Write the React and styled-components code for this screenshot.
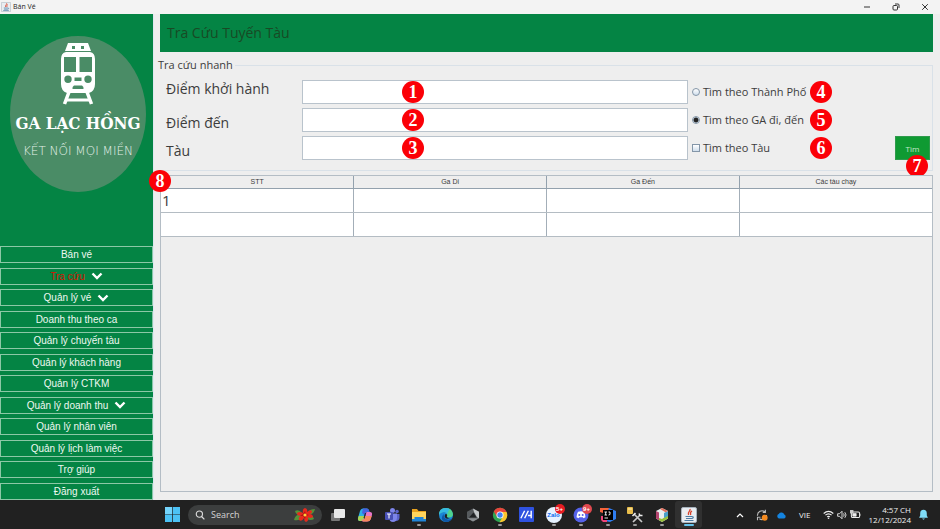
import React from "react";
import styled, { createGlobalStyle, css } from "styled-components";

const UI = `"Open Sans", "Noto Sans", sans-serif`;
const SANS = `"Liberation Sans", Arial, sans-serif`;
const GREEN = "#048444";

const Global = createGlobalStyle`
  * { box-sizing: border-box; }
  body { margin: 0; background: #eeeeee; font-family: ${UI}; color: #3c3c3c; }
  button, input { font: inherit; color: inherit; margin: 0; padding: 0; }
`;

const Desktop = styled.div`
  display: flex;
  flex-direction: column;
  min-height: 100vh;
`;

/* ---------- window title bar ---------- */

const TitleBar = styled.header`
  display: flex;
  align-items: center;
  height: 14px;
  padding: 0 8px 0 1px;
  gap: 2px;
  background: #f3f3f3;
  font-family: ${UI};
  font-size: 7px;
  line-height: 14px;
  color: #222;
`;

const WindowTitle = styled.span`
  flex: 1;
`;

const WindowControls = styled.div`
  display: flex;
  gap: 15px;
`;

const WindowButton = styled.button`
  display: flex;
  align-items: center;
  justify-content: center;
  width: 14px;
  height: 14px;
  border: 0;
  background: none;
`;

/* ---------- sidebar ---------- */

const Body = styled.div`
  display: flex;
  flex: 1;
`;

const Sidebar = styled.aside`
  display: flex;
  flex-direction: column;
  flex: none;
  width: 153px;
  background: ${GREEN};
`;

const LogoArea = styled.div`
  display: flex;
  justify-content: center;
  height: 232px;
  padding: 22px 0 0 3px;
`;

const LogoDisc = styled.div`
  display: flex;
  flex-direction: column;
  align-items: center;
  width: 136px;
  height: 156px;
  padding-top: 6px;
  border-radius: 50%;
  background: #4a8c66;
  color: #fff;
  white-space: nowrap;
`;

const LogoName = styled.strong`
  margin-top: 6px;
  font: bold 17px/24px "DejaVu Serif Condensed", "DejaVu Serif", serif;
`;

const LogoTagline = styled.span`
  margin-top: 8px;
  font: 200 12px/16px "DejaVu Sans Light", "DejaVu Sans", sans-serif;
  color: #e4f1e9;
`;

const Menu = styled.nav`
  display: flex;
  flex: 1;
  flex-direction: column;
  justify-content: space-between;
  gap: 4px;
`;

const MenuButton = styled.button`
  display: flex;
  align-items: center;
  justify-content: center;
  gap: 6px;
  height: 17px;
  border: 1px solid #8cc8a6;
  background: ${GREEN};
  font-family: ${SANS};
  font-size: 10px;
  line-height: 15px;
  color: ${(p) => (p.$active ? "#d81400" : "#eef8f1")};
`;

/* ---------- main panel ---------- */

const Main = styled.main`
  display: flex;
  flex: 1;
  flex-direction: column;
  min-width: 0;
  padding: 0 7px 8px 4px;
  border-left: 1px solid #dfe8f0;
`;

const PageTitle = styled.h1`
  margin: 0 0 6px 2px;
  padding: 0 7px;
  height: 38px;
  background: ${GREEN};
  font-size: 14px;
  font-weight: 400;
  line-height: 38px;
  color: #184a24;
`;

const SearchForm = styled.fieldset`
  display: block;
  min-width: 0;
  margin: 0 0 4px;
  padding: 8px 2px 10px 7px;
  border: 1px solid #d9e1e8;
  border-left-color: transparent;
`;

const Legend = styled.legend`
  margin-left: -8px;
  padding: 0 2px 0 0;
  font-size: 11px;
  line-height: 14px;
`;

const FormGrid = styled.div`
  display: grid;
  grid-template-columns: 136px minmax(0, 1fr) 207px 35px;
  grid-auto-rows: 24px;
  row-gap: 4px;
`;

const FieldLabel = styled.label`
  align-self: ${(p) => p.$align};
  font-size: 14px;
  line-height: 18px;
`;

const FieldCell = styled.div`
  position: relative;
  display: flex;
`;

const TextInput = styled.input`
  flex: 1;
  min-width: 0;
  padding: 0 4px;
  border: 1px solid #b9c3cc;
  border-radius: 0;
  background: #fff;
  font-size: 12px;
`;

const OptionCell = styled.div`
  position: relative;
  display: flex;
  align-items: center;
  padding-left: 4px;
`;

const OptionLabel = styled.label`
  display: flex;
  align-items: center;
  gap: 3px;
  font-size: 11px;
  line-height: 16px;
`;

const choiceBox = css`
  appearance: none;
  width: 8px;
  height: 8px;
  border: 1px solid #8496a8;
  background: linear-gradient(#ffffff, #cfdeec);
`;

const Radio = styled.input.attrs({ type: "radio" })`
  ${choiceBox}
  border-radius: 50%;
  &:checked {
    background: radial-gradient(circle, #222 0 2px, #dbe6f0 3px);
  }
`;

const Checkbox = styled.input.attrs({ type: "checkbox" })`
  ${choiceBox}
  &:checked { background: #222; }
`;

const SubmitCell = styled.div`
  position: relative;
  display: flex;
  grid-column: 4;
`;

const SubmitButton = styled.button`
  flex: 1;
  border: 1px solid #2f9a4c;
  background: #0f9a32;
  font-size: 8px;
  color: #c4e8ca;
`;

const badgeSpots = {
  field: "left: 100px; top: 1px;",
  option: "left: 122px; top: 1px;",
  submit: "left: 11px; top: 19px;",
  table: "left: -12px; top: -6px;",
};

const Badge = styled.span`
  position: absolute;
  ${(p) => badgeSpots[p.$spot]}
  width: 22px;
  height: 22px;
  border-radius: 50%;
  background: #fb0007;
  font: bold 18px/22px "Liberation Serif", "Times New Roman", serif;
  text-align: center;
  color: #fff;
`;

/* ---------- result table ---------- */

const TablePane = styled.section`
  position: relative;
  flex: 1;
  margin-left: 2px;
  border: 1px solid #b4bdc5;
`;

const Table = styled.table`
  width: 100%;
  table-layout: fixed;
  border-collapse: collapse;
`;

const HeadCell = styled.th`
  height: 12px;
  padding: 0;
  border-right: 1px solid #93a1ad;
  border-bottom: 1px solid #93a1ad;
  background: #eeeeee;
  font: 400 7px/11px ${SANS};
  &:last-child { border-right: 0; }
`;

const Cell = styled.td`
  height: 24px;
  padding: 0 1px;
  border-right: 1px solid #a3aeb8;
  border-bottom: 1px solid #b4bcc3;
  background: #fff;
  font-size: 15px;
  line-height: 22px;
  &:last-child { border-right: 0; }
`;

/* ---------- taskbar ---------- */

const Taskbar = styled.footer`
  display: flex;
  align-items: center;
  height: 29px;
  padding: 0 12px 0 159px;
  background: #212121;
  color: #f0f0f0;
`;

const TaskButton = styled.button`
  position: relative;
  display: flex;
  align-items: center;
  justify-content: center;
  width: 27px;
  height: 27px;
  border: 0;
  border-radius: 3px;
  background: ${(p) => (p.$state === "active" ? "#303030" : "none")};
  &::after {
    content: "";
    position: absolute;
    bottom: 2px;
    width: ${(p) => (p.$state === "active" ? "10px" : "4px")};
    height: 2px;
    border-radius: 1px;
    background: ${(p) =>
      ({ active: "#63c3ee", running: "#9a9a9a" })[p.$state] || "transparent"};
  }
`;

const SearchBox = styled.label`
  display: flex;
  align-items: center;
  gap: 6px;
  width: 134px;
  height: 20px;
  margin: 0 2px;
  padding: 0 6px 0 7px;
  border-radius: 10px;
  background: #3c3e3e;
`;

const SearchInput = styled.input`
  flex: 1;
  min-width: 0;
  border: 0;
  background: none;
  font-size: 9px;
  line-height: 14px;
  &::placeholder { color: #d4d4d4; opacity: 1; }
`;

const Tray = styled.div`
  display: flex;
  align-items: center;
  gap: 8px;
  margin-left: auto;
  font-size: 8px;
  line-height: 10px;
`;

const TrayGroup = styled.div`
  display: flex;
  align-items: center;
  gap: 3px;
`;

const Language = styled.span`
  margin: 0 4px;
`;

const Clock = styled.time`
  text-align: right;
`;

/* ---------- drawings ---------- */

const Icon = ({ size = 16, w, h, box = "0 0 16 16", children }) => (
  <svg width={w || size} height={h || size} viewBox={box} fill="none" aria-hidden="true">
    {children}
  </svg>
);

const JavaIcon = ({ size }) => (
  <Icon size={size}>
    <rect x=".5" y=".5" width="15" height="15" rx="1.5" fill="#e9edf1" stroke="#a7b2bd" />
    <path d="M9 2c1 2-3 3-1.500 6M11 4c-2 1-2 2-1.300 4" stroke="#d9412b" strokeWidth="1.300" />
    <path d="M4.500 9.500h6.500M5 11.500h5.500M3.500 13.500h9M11 9.500c2 0 1.500 2-.5 2" stroke="#4c7ba3" strokeWidth="1.100" />
  </Icon>
);

const Chevron = () => (
  <Icon w={12} h={8} box="0 0 12 8">
    <path d="M1.500 1.500 6 6l4.500-4.500" stroke="#fff" strokeWidth="2.400" />
  </Icon>
);

const Train = () => (
  <Icon w={36} h={63} box="0 0 36 63">
    <path fill="#fff" fillRule="evenodd" d="M8 1h20l3 8H5l3-8Zm4 3v3h3V4h-3Zm9 0v3h3V4h-3Z" />
    <path
      fill="#fff"
      fillRule="evenodd"
      d="M6 10h24q5 1 5 7v25q0 7-6 9H7q-6-2-6-9V17q0-6 5-7ZM4 15v15h12V15H4Zm15.500 0v15H32V15H19.500ZM8 33.500a3.700 3.700 0 1 0 0 7.400 3.700 3.700 0 0 0 0-7.400Zm20 0a3.700 3.700 0 1 0 0 7.400 3.700 3.700 0 0 0 0-7.400ZM14.500 35.500v3.500h7v-3.500h-7ZM14 43.500q-2 1-1.500 3.500h11Q24 44.500 22 43.500h-8Z"
    />
    <path d="m9 50-4.500 12M27 50l4.500 12" stroke="#fff" strokeWidth="3.500" />
    <path d="M6 58h24" stroke="#fff" strokeWidth="3" />
  </Icon>
);

const Minimize = () => (
  <Icon size={8} box="0 0 8 8"><path d="M1 4h6" stroke="#333" /></Icon>
);
const Restore = () => (
  <Icon size={8} box="0 0 8 8">
    <rect x="1" y="2.500" width="4.500" height="4.500" rx="1" stroke="#333" />
    <path d="M3 1h3q1 0 1 1v3" stroke="#333" />
  </Icon>
);
const Close = () => (
  <Icon size={8} box="0 0 8 8"><path d="m1.200 1.200 5.600 5.600m0-5.600L1.200 6.800" stroke="#333" /></Icon>
);

const Windows = () => (
  <Icon size={15}>
    <path fill="#4cc2f5" d="M0 0h7.600v7.600H0zM8.400 0H16v7.600H8.400zM0 8.400h7.600V16H0zM8.400 8.400H16V16H8.400z" />
    <path fill="#8fe0ff" opacity=".6" d="M0 0h7.600v7.600H0z" />
  </Icon>
);
const Magnifier = () => (
  <Icon size={10}>
    <circle cx="7" cy="6.500" r="5" stroke="#ddd" strokeWidth="1.800" />
    <path d="m10.500 10.500 4.500 4.500" stroke="#ddd" strokeWidth="2" />
  </Icon>
);
const Flower = () => (
  <Icon w={22} h={14} box="0 0 22 14">
    <path fill="#55913a" d="M0 12q1-5 6-6l3 4q-4 3-9 2ZM1 3q4-2 7 2l-2 2Q2 7 1 3ZM21 1q-5 0-7 3l1 3q5-1 6-6ZM20 11q-2-5-6-4l-1 4q4 2 7 0Z" />
    <path fill="#e8291c" d="M11 0q3 1 2 4 3-3 5-1 0 3-3 3 4 0 4 3-3 2-5 0 1 4-2 5-2-1-2-4-2 4-5 2-1-3 2-4-4 0-4-3 3-2 6 0-1-4 2-5Z" />
    <path fill="#b01313" d="m11 3 1 3 3 1-3 1-1 3-2-3-3 0 3-2 2-3Z" />
    <circle cx="11" cy="7" r="1.600" fill="#ffcf3e" />
  </Icon>
);
const TaskView = () => (
  <Icon>
    <rect x="1" y="6" width="9" height="8" rx="1" fill="#777" />
    <rect x="4" y="2" width="11" height="9" rx="1" fill="#e8e8e8" />
  </Icon>
);
const Copilot = () => (
  <Icon>
    <path d="M6 1.500h4q1.500 0 2 2l.5 1.500H9L6.500 12.500Q6 14 4.500 14H3q-2.500 0-2-3L3 4q.7-2.500 3-2.500Z" fill="#2caee8" />
    <path d="M6 1.500h4q1.500 0 2 2l.5 1.500H9.500L8 8.500 5 6l1-4.500Z" fill="#4561e0" />
    <path d="M1.800 9H7.600l-1.100 4Q6 14 4.500 14H3q-2.500 0-2-3l.8-2Z" fill="#a9d354" />
    <path d="M9.500 5H13q2.500 0 2 3l-1.500 4.500Q13 14.500 10 14.500H6.500Q5 14.500 4.500 13L7.500 12l2-7Z" fill="#e877c8" />
    <path d="M5 13.500 7.500 12l1-3h6.200l-1.200 3.500q-.6 2-3.500 2H6.500q-1 0-1.500-1Z" fill="#f7885b" />
    <path d="M9 6 7.400 11h-.900L8 6h1Z" fill="#212121" />
  </Icon>
);
const Teams = () => (
  <Icon>
    <circle cx="13" cy="4.500" r="1.800" fill="#5b63c9" />
    <circle cx="8.500" cy="3.500" r="2.500" fill="#7d85ea" />
    <path d="M9 7h6.500v4q-.5 3-3.500 3H9V7Z" fill="#5b63c9" />
    <path d="M5 6.500h8V11q-.5 4-4 4t-4-4V6.500Z" fill="#7d85ea" />
    <rect x="1" y="5" width="8" height="8" rx="1" fill="#4850b4" />
    <path d="M3 7h4M5 7v4.500" stroke="#fff" strokeWidth="1.100" />
  </Icon>
);
const Explorer = () => (
  <Icon>
    <path d="M1 2h5l1.500 2H15v10H1V2Z" fill="#e8a21f" />
    <path d="M1 5h14v9H1V5Z" fill="#ffd45c" />
    <path d="M1 14.500V12h2.500V10h9v2H15v2.500H1Z" fill="#1f86d9" />
  </Icon>
);
const Edge = () => (
  <Icon>
    <circle cx="8" cy="8" r="7" fill="#1b86d6" />
    <path d="M1 8Q1 1 8 1q6 0 7 6 0 3.500-4 3.500-2.500 0-2-1.500Q9.500 5 6 5 2.500 5 1 8Z" fill="#4fd38f" />
    <path d="M1 8Q1 1 8 1q3 0 4 1.500Q10 3 9.500 7 8.500 5 6 5 2.500 5 1 8Z" fill="#35b9e4" />
    <path d="M6 7q-1 3 2 5 3 1.500 6-.5-2 3.500-6 3.500-5-1-4-5 .5-2 2-3Z" fill="#0f57a6" />
    <path d="M7 7.500q1-1 2 0 .5 1-.2 2 .2 1.500 3.200 1.500-3 1.500-4.500 0T7 7.500Z" fill="#202020" />
  </Icon>
);
const Hexagon = () => (
  <Icon>
    <path d="m8 1.500 6 3.300v6.400l-6 3.300-6-3.300V4.800l6-3.300Z" fill="#565a5d" />
    <path d="m8 1.500 6 3.300v6.400l-2-1L9 5 8 1.500Z" fill="#c3c7c9" />
    <path d="m4 10.500 4.500-5 3 5H4Z" fill="#202224" />
    <path d="m2 11.200 12 0-6 3.300-6-3.300Z" fill="#8a8e91" />
  </Icon>
);
const Chrome = () => (
  <Icon>
    <circle cx="8" cy="8" r="7.200" fill="#2fa653" />
    <path d="M1.800 4.400A7.200 7.200 0 0 1 14.700 5H8L5 9.800 1.800 4.400Z" fill="#e8453c" />
    <path d="M14.600 5A7.200 7.200 0 0 1 7.500 15.200L11 9.600 8 5h6.600Z" fill="#fbc52d" />
    <circle cx="8" cy="8" r="3.500" fill="#fff" />
    <circle cx="8" cy="8" r="2.700" fill="#4285f4" />
  </Icon>
);
const MyApp = () => (
  <Icon size={15}>
    <rect width="16" height="16" rx="1" fill="#2f52e0" />
    <path d="m2 12 4-8M6 12l4-8M13 4v8M9.500 9H13" stroke="#fff" strokeWidth="1.500" />
  </Icon>
);
const CountedIcon = styled.span`
  position: relative;
  display: flex;
`;
const Count = styled.span`
  position: absolute;
  right: -3px;
  top: -3px;
  width: 10px;
  height: 10px;
  border-radius: 50%;
  background: ${(p) => p.$color};
  font: bold 6px/10px ${SANS};
  text-align: center;
  color: #fff;
`;
const ZaloText = styled.span`
  display: flex;
  align-items: center;
  justify-content: center;
  width: 16px;
  height: 16px;
  border-radius: 50%;
  background: #e6f2ff;
  font: bold 6px/16px ${SANS};
  color: #0a68ee;
`;
const Zalo = () => (
  <CountedIcon><ZaloText>Zalo</ZaloText><Count $color="#e81c22">5+</Count></CountedIcon>
);
const Discord = () => (
  <CountedIcon>
    <Icon>
      <circle cx="8" cy="8" r="7.500" fill="#5562ea" />
      <path d="M5 4.800q3-1 6 0 1.500 2.500 1.500 5.500l-2 1-.8-1H6.300l-.8 1-2-1q0-3 1.500-5.500Z" fill="#fff" />
      <circle cx="6.300" cy="8" r="1" fill="#5562ea" />
      <circle cx="9.700" cy="8" r="1" fill="#5562ea" />
    </Icon>
    <Count $color="#e0484f">9+</Count>
  </CountedIcon>
);
const IntelliJ = () => (
  <Icon>
    <path d="M0 1h9l-2 13-4-1V6L0 5V1Z" fill="#f5633a" />
    <path d="m9 1 7 3v8l-6 3-5-1L9 1Z" fill="#2f7df0" />
    <path d="M1 9h6v6H3l-2-2V9Z" fill="#f0457a" />
    <rect x="3" y="3" width="10" height="10" fill="#000" />
    <path d="M4.500 5H7M5.700 5v3M4.500 8H7M8.500 5H10v2.500L8.500 8M4.500 11H8" stroke="#fff" strokeWidth=".9" />
  </Icon>
);
const Tools = () => (
  <Icon>
    <rect x="0" y="0" width="6" height="7" rx="1" fill="#e9bd4a" />
    <path d="M1 2h4" stroke="#fff2bd" />
    <path d="m6 15 7-7m2 7L7 7" stroke="#c9c9c9" strokeWidth="1.700" />
    <path d="m5.500 9 3-3M12 6.500l1 2 2.500 0" stroke="#eee" strokeWidth="1.500" />
  </Icon>
);
const NetBeans = () => (
  <Icon>
    <path d="m8 1 6 3v7.500L8 15l-6-3.500V4l6-3Z" fill="#e8eef0" />
    <path d="M2 4v7.500l3 1.800V5.500L2 4Z" fill="#b4456f" />
    <path d="m5 13.300 3 1.700 6-3.500V8l-6 4-3-1v2.300Z" fill="#98bf3b" />
    <path d="M14 4v5l-4 2V6l4-2Z" fill="#4a9fc9" />
    <path d="m8 1 6 3-2.500 1.200L6 2l2-1Z" fill="#e36f5d" />
  </Icon>
);
const Caret = () => (
  <Icon w={16} h={6} box="-4 0 16 6"><path d="m1 5 3-3 3 3" stroke="#fff" strokeWidth="1.200" /></Icon>
);
const Sync = () => (
  <Icon size={12}>
    <path d="M2 9a6 6 0 0 1 10-5M12.500 1v3.500H9M14 8a6 6 0 0 1-9.500 5M2 15v-4h4" stroke="#bbb" strokeWidth="1.500" />
    <circle cx="11.500" cy="11.500" r="4" fill="#f58a1f" />
  </Icon>
);
const Cloud = () => (
  <Icon w={11} h={8} box="0 0 16 11">
    <path d="M4 10.500a3.500 3.500 0 0 1 0-6.500 4.500 4.500 0 0 1 8 .8 3 3 0 0 1 0 5.700H4Z" fill="#1484e0" />
  </Icon>
);
const Wifi = () => (
  <Icon size={11}>
    <path d="M1 6.500q7-6 14 0M3.500 9q4.500-4 9 0M6 11.500q2-1.500 4 0" stroke="#eee" strokeWidth="1.700" />
    <circle cx="8" cy="13.500" r="1.200" fill="#eee" />
  </Icon>
);
const Volume = () => (
  <Icon size={10}>
    <path d="M1 6h3l4-4v12l-4-4H1V6ZM10.500 5.500q2 2.500 0 5M12.500 3.500q4 4.500 0 9" stroke="#eee" strokeWidth="1.400" />
  </Icon>
);
const Battery = () => (
  <Icon w={11} h={9} box="0 0 16 13">
    <rect x="2" y="3" width="12" height="8" rx="2" stroke="#eee" strokeWidth="1.500" />
    <path d="M4 5h5v4H4zM14.500 5.500v3" fill="#eee" stroke="#eee" />
    <path d="M0 0h5v5H0z" fill="#ccc" />
  </Icon>
);
const Bell = () => (
  <Icon w={9} h={11} box="0 0 12 15">
    <path d="M6 1q4.500 0 4.500 5v3l1.500 3H0l1.500-3V6Q1.500 1 6 1ZM4 13h4q-2 3-4 0Z" fill="#7fdcf7" />
  </Icon>
);

/* ---------- data ---------- */

const MENU = [
  { text: "Bán vé" },
  { text: "Tra cứu", active: true, opens: true },
  { text: "Quản lý vé", opens: true },
  { text: "Doanh thu theo ca" },
  { text: "Quản lý chuyến tàu" },
  { text: "Quản lý khách hàng" },
  { text: "Quản lý CTKM" },
  { text: "Quản lý doanh thu", opens: true },
  { text: "Quản lý nhân viên" },
  { text: "Quản lý lịch làm việc" },
  { text: "Trợ giúp" },
  { text: "Đăng xuất" },
];

const ROWS = [
  { id: "from", label: "Điểm khởi hành", align: "start", badge: 1, option: "Tìm theo Thành Phố", optionBadge: 4, Control: Radio },
  { id: "to", label: "Điểm đến", align: "end", badge: 2, option: "Tìm theo GA đi, đến", optionBadge: 5, Control: Radio, checked: true },
  { id: "train", label: "Tàu", align: "end", badge: 3, option: "Tìm theo Tàu", optionBadge: 6, Control: Checkbox, submit: true },
];

const COLUMNS = ["STT", "Ga Di", "Ga Đến", "Các tàu chạy"];
const RESULTS = [["1", "", "", ""], ["", "", "", ""]];

const APPS = [
  { name: "Task view", Art: TaskView },
  { name: "Copilot", Art: Copilot },
  { name: "Teams", Art: Teams },
  { name: "File Explorer", Art: Explorer, state: "running" },
  { name: "Edge", Art: Edge },
  { name: "Hexagon", Art: Hexagon },
  { name: "Chrome", Art: Chrome, state: "running" },
  { name: "MyASUS", Art: MyApp },
  { name: "Zalo", Art: Zalo, state: "running" },
  { name: "Discord", Art: Discord, state: "running" },
  { name: "IntelliJ IDEA", Art: IntelliJ, state: "running" },
  { name: "Tools", Art: Tools, state: "running" },
  { name: "NetBeans", Art: NetBeans, state: "running" },
  { name: "Java", Art: JavaIcon, state: "active" },
];

export default function App() {
  return (
    <Desktop>
      <Global />
      <TitleBar>
        <JavaIcon size={10} />
        <WindowTitle>Bán Vé</WindowTitle>
        <WindowControls>
          <WindowButton aria-label="Minimize"><Minimize /></WindowButton>
          <WindowButton aria-label="Restore"><Restore /></WindowButton>
          <WindowButton aria-label="Close"><Close /></WindowButton>
        </WindowControls>
      </TitleBar>

      <Body>
        <Sidebar>
          <LogoArea>
            <LogoDisc>
              <Train />
              <LogoName>GA LẠC HỒNG</LogoName>
              <LogoTagline>KẾT NỐI MỌI MIỀN</LogoTagline>
            </LogoDisc>
          </LogoArea>
          <Menu>
            {MENU.map((m) => (
              <MenuButton key={m.text} $active={m.active}>
                {m.text}
                {m.opens && <Chevron />}
              </MenuButton>
            ))}
          </Menu>
        </Sidebar>

        <Main>
          <PageTitle>Tra Cứu Tuyến Tàu</PageTitle>
          <SearchForm>
            <Legend>Tra cứu nhanh</Legend>
            <FormGrid>
              {ROWS.map(({ Control, ...r }) => (
                <React.Fragment key={r.id}>
                  <FieldLabel htmlFor={r.id} $align={r.align}>{r.label}</FieldLabel>
                  <FieldCell>
                    <TextInput id={r.id} type="text" />
                    <Badge $spot="field">{r.badge}</Badge>
                  </FieldCell>
                  <OptionCell>
                    <OptionLabel>
                      <Control name={Control === Radio ? "mode" : "byTrain"} defaultChecked={r.checked} />
                      {r.option}
                    </OptionLabel>
                    <Badge $spot="option">{r.optionBadge}</Badge>
                  </OptionCell>
                  {r.submit ? (
                    <SubmitCell>
                      <SubmitButton type="button">Tìm</SubmitButton>
                      <Badge $spot="submit">7</Badge>
                    </SubmitCell>
                  ) : (
                    <span />
                  )}
                </React.Fragment>
              ))}
            </FormGrid>
          </SearchForm>

          <TablePane>
            <Table>
              <thead>
                <tr>{COLUMNS.map((c) => <HeadCell key={c} scope="col">{c}</HeadCell>)}</tr>
              </thead>
              <tbody>
                {RESULTS.map((row, i) => (
                  <tr key={i}>{row.map((v, j) => <Cell key={j}>{v}</Cell>)}</tr>
                ))}
              </tbody>
            </Table>
            <Badge $spot="table">8</Badge>
          </TablePane>
        </Main>
      </Body>

      <Taskbar>
        <TaskButton aria-label="Start"><Windows /></TaskButton>
        <SearchBox>
          <Magnifier />
          <SearchInput type="text" placeholder="Search" aria-label="Search" />
          <Flower />
        </SearchBox>
        {APPS.map(({ name, Art, state }) => (
          <TaskButton key={name} aria-label={name} $state={state}><Art /></TaskButton>
        ))}
        <Tray>
          <Caret />
          <Sync />
          <Cloud />
          <Language>VIE</Language>
          <TrayGroup>
            <Wifi />
            <Volume />
            <Battery />
          </TrayGroup>
          <Clock>4:57 CH<br />12/12/2024</Clock>
          <Bell />
        </Tray>
      </Taskbar>
    </Desktop>
  );
}
